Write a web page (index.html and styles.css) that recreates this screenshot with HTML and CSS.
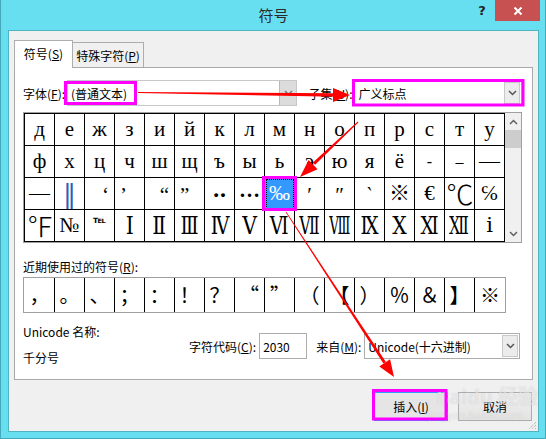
FILE: index.html
```html
<!DOCTYPE html>
<html lang="zh-CN">
<head>
<meta charset="utf-8">
<title>符号</title>
<link rel="stylesheet" href="styles.css">
</head>
<body>
<div class="window">
  <div class="titlebar">
    <div class="tb-spacer"></div>
    <div class="title">符号</div>
    <div class="controls">
      <span class="help">?</span>
      <span class="close"><svg width="10" height="10" viewBox="0 0 10 10"><path d="M1.5 1.5L8.5 8.5M8.5 1.5L1.5 8.5" stroke="#fff" stroke-width="2" fill="none"/></svg></span>
    </div>
  </div>
  <div class="client">
    <div class="tabs">
      <div class="tab active">符号(<u>S</u>)</div>
      <div class="tab">特殊字符(<u>P</u>)</div>
    </div>
    <div class="panel">
      <div class="font-row">
        <span class="lbl font-lbl">字体(<u>F</u>):</span>
        <div class="combo font-combo"><span class="combo-text">(普通文本)</span><span class="dd"><svg width="9" height="6" viewBox="0 0 9 6"><path d="M1 1l3.5 3.5L8 1" fill="none" stroke="#777" stroke-width="1.5"/></svg></span></div>
        <span class="lbl subset-lbl">子集(<u>U</u>):</span>
        <div class="combo subset-combo"><span class="combo-text">广义标点</span><span class="dd"><svg width="9" height="6" viewBox="0 0 9 6"><path d="M1 1l3.5 3.5L8 1" fill="none" stroke="#555" stroke-width="1.5"/></svg></span></div>
      </div>
      <div class="charmap">
        <div class="cells">
          <span class="c">д</span><span class="c">е</span><span class="c">ж</span><span class="c">з</span><span class="c">и</span><span class="c">й</span><span class="c">к</span><span class="c">л</span><span class="c">м</span><span class="c">н</span><span class="c">о</span><span class="c">п</span><span class="c">р</span><span class="c">с</span><span class="c">т</span><span class="c">у</span>
          <span class="c">ф</span><span class="c">х</span><span class="c">ц</span><span class="c">ч</span><span class="c">ш</span><span class="c">щ</span><span class="c">ъ</span><span class="c">ы</span><span class="c">ь</span><span class="c">э</span><span class="c">ю</span><span class="c">я</span><span class="c">ё</span><span class="c sm">‐</span><span class="c sm">–</span><span class="c">—</span>
          <span class="c">—</span><span class="c dbl">‖</span><span class="c q qr">‘</span><span class="c q ql">’</span><span class="c q qr">“</span><span class="c q ql">”</span><span class="c dots">‥</span><span class="c dots">…</span><span class="c sel">‰</span><span class="c q">′</span><span class="c q">″</span><span class="c q">‵</span><span class="c">※</span><span class="c">€</span><span class="c lt">℃</span><span class="c">℅</span>
          <span class="c lt">℉</span><span class="c">№</span><span class="c tel">℡</span><span class="c rn"><i>Ⅰ</i></span><span class="c rn"><i>Ⅱ</i></span><span class="c rn"><i class="w3">Ⅲ</i></span><span class="c rn"><i class="w3">Ⅳ</i></span><span class="c rn"><i>Ⅴ</i></span><span class="c rn"><i class="w3">Ⅵ</i></span><span class="c rn"><i class="w4">Ⅶ</i></span><span class="c rn"><i class="w5">Ⅷ</i></span><span class="c rn"><i class="w3">Ⅸ</i></span><span class="c rn"><i>Ⅹ</i></span><span class="c rn"><i class="w3">Ⅺ</i></span><span class="c rn"><i class="w4">Ⅻ</i></span><span class="c">ⅰ</span>
        </div>
        <div class="scrollbar">
          <span class="sb-btn"><svg width="9" height="6" viewBox="0 0 9 6"><path d="M1 5l3.5-3.5L8 5" fill="none" stroke="#606060" stroke-width="1.5"/></svg></span>
          <span class="thumb"></span>
          <span class="track"></span>
          <span class="sb-btn"><svg width="9" height="6" viewBox="0 0 9 6"><path d="M1 1l3.5 3.5L8 1" fill="none" stroke="#606060" stroke-width="1.5"/></svg></span>
        </div>
      </div>
      <div class="recent-lbl">近期使用过的符号(<u>R</u>):</div>
      <div class="recent">
        <span class="r rl">，</span><span class="r rl">。</span><span class="r rl">、</span><span class="r">；</span><span class="r">：</span><span class="r">！</span><span class="r">？</span><span class="r rq-r">“</span><span class="r rq-l">”</span><span class="r">（</span><span class="r">【</span><span class="r">）</span><span class="r">％</span><span class="r">＆</span><span class="r">】</span><span class="r">※</span>
      </div>
      <div class="info">
        <div class="names">
          <div class="name-lbl">Unicode 名称:</div>
          <div class="name-val">千分号</div>
        </div>
        <div class="code-row">
          <span class="lbl">字符代码(<u>C</u>):</span>
          <div class="code-input">2030</div>
          <span class="lbl from-lbl">来自(<u>M</u>):</span>
          <div class="combo from-combo"><span class="combo-text">Unicode(十六进制)</span><span class="dd"><svg width="9" height="6" viewBox="0 0 9 6"><path d="M1 1l3.5 3.5L8 1" fill="none" stroke="#555" stroke-width="1.5"/></svg></span></div>
        </div>
      </div>
    </div>
    <div class="buttons">
      <button class="btn default">插入(<u>I</u>)</button>
      <button class="btn">取消</button>
    </div>
    <svg class="grip" width="10" height="10" viewBox="0 0 10 10"><path d="M9 2L2 9M9 5L5 9M9 8L8 9" stroke="#a0a0a0" stroke-width="1" stroke-dasharray="1 1" fill="none"/></svg>
  </div>
</div>
<div class="watermark"><span class="wm-big">Baidu 经验</span><span class="wm-small">jingyan.baidu.com</span></div>
<svg class="annot" width="546" height="439" viewBox="0 0 546 439">
  <g fill="none" stroke="#ff00ff" stroke-width="3">
    <rect x="65.5" y="82.5" width="70" height="21"/>
    <rect x="353.5" y="80.5" width="169.5" height="24.5"/>
    <rect x="263.5" y="177.5" width="32" height="32"/>
    <rect x="373.5" y="390.5" width="72.5" height="28.5"/>
  </g>
  <g fill="#ff0000">
    <polygon points="138,92 336,93.3 336,96.7 138,93"/>
    <polygon points="333,88 350,95 333,102"/>
    <polygon points="358.3,122.4 357.7,121.6 312.9,162.4 315.1,164.8"/>
    <polygon points="300,177 317.6,169.3 308.6,159.9"/>
    <polygon points="286.3,211.8 285.7,212.2 383.4,363.6 385.9,362"/>
    <polygon points="394,377 390.1,359.2 379.3,366.4"/>
  </g>
</svg>
</body>
</html>
```
FILE: styles.css
```css
html, body {
  margin: 0;
  padding: 0;
}
body {
  width: 546px;
  height: 439px;
  overflow: hidden;
  position: relative;
  font-family: "Noto Sans CJK SC", "Microsoft YaHei", sans-serif;
  font-size: 12px;
  line-height: 17px;
  color: #000;
}
u { text-decoration: underline; text-underline-offset: 1px; }

.window {
  box-sizing: border-box;
  width: 546px;
  height: 439px;
  background: #68dff0;
  border: 1px solid #45a9bb;
  border-top: 0;
  padding: 0 6px 6px 7px;
  display: flex;
  flex-direction: column;
}

.titlebar {
  height: 30px;
  display: grid;
  grid-template-columns: 1fr auto 1fr;
  align-items: start;
}
.title {
  line-height: 30px;
  font-size: 15px;
  color: #2b2b2b;
}
.controls {
  justify-self: end;
  display: flex;
  align-items: flex-start;
  margin-right: -1px;
}
.help {
  width: 26px;
  height: 21px;
  display: flex;
  align-items: center;
  justify-content: center;
  font-family: "DejaVu Sans", sans-serif;
  font-weight: bold;
  font-size: 13px;
  color: #222;
}
.close {
  width: 45px;
  height: 21px;
  background: #c75050;
  display: flex;
  align-items: center;
  justify-content: center;
}

.client {
  flex: 1;
  position: relative;
  background: #f0f0f0;
  border: 1px solid #4fb3c2;
  padding: 9px 5px 0 5px;
}

.tabs {
  display: flex;
  align-items: flex-end;
  height: 27px;
}
.tab {
  box-sizing: border-box;
  height: 25px;
  border: 1px solid #adadad;
  border-bottom: 0;
  background: #f0f0f0;
  display: flex;
  align-items: center;
  justify-content: center;
}
.tab.active {
  position: relative;
  z-index: 1;
  width: 59px;
  height: 28px;
  margin-bottom: -1px;
  background: #fff;
  padding-bottom: 2px;
}
.tab + .tab {
  width: 72px;
  margin-left: -1px;
  padding-top: 1px;
}

.panel {
  box-sizing: border-box;
  height: 313px;
  background: #fff;
  border: 1px solid #a9a9a9;
  padding: 12px 10px 0 8px;
}

.font-row {
  display: flex;
  align-items: center;
  height: 26px;
}
.lbl { white-space: nowrap; }
.font-lbl { width: 44px; }
.subset-lbl { margin-left: 11px; width: 44px; }

.combo {
  box-sizing: border-box;
  height: 26px;
  border: 1px solid #c4c4c4;
  background: #fff;
  display: flex;
  align-items: stretch;
}
.combo-text {
  flex: 1;
  display: flex;
  align-items: center;
  padding-left: 3px;
  white-space: nowrap;
}
.dd {
  width: 16px;
  background: #e6e6e6;
  border-left: 1px solid #c4c4c4;
  display: flex;
  align-items: center;
  justify-content: center;
}
.font-combo { width: 231px; border-color: #c8c8c8; }
.font-combo .dd { background: #dcdcdc; border-left-color: #b8b8b8; }
.subset-combo { width: 168px; margin-left: 2px; }
.subset-combo .dd, .from-combo .dd { margin: 1px; border: 1px solid #c9c9c9; background: #ececec; width: 14px; }

.charmap {
  display: flex;
  margin-top: 6px;
  border: 1px solid #a0a0a0;
}
.cells {
  display: grid;
  grid-template-columns: repeat(16, 30px);
  grid-auto-rows: 32px;
  border-left: 1px solid #000;
  border-top: 1px solid #000;
}
.c {
  box-sizing: border-box;
  border-right: 1px solid #000;
  border-bottom: 1px solid #000;
  display: flex;
  align-items: center;
  justify-content: center;
  font-family: "Liberation Serif", "DejaVu Serif", "Noto Sans CJK SC", serif;
  font-size: 21px;
  line-height: 1;
  color: #000;
}
.c.sm { font-size: 16px; }
.c.dbl { color: #2f5fb8; font-size: 26px; font-family: "DejaVu Serif", serif; }
.c.q { align-items: flex-start; padding-top: 7px; }
.c.qr { justify-content: flex-end; padding-right: 5px; }
.c.ql { justify-content: flex-start; padding-left: 5px; }
.c.dots { align-items: flex-end; padding-bottom: 8px; font-weight: bold; }
.c.sel {
  background: #3399ff;
  color: #fff;
  outline: 1px dotted #000;
  outline-offset: -2px;
}
.c.lt { font-family: "Noto Sans CJK SC", sans-serif; font-weight: 300; font-size: 27px; letter-spacing: -1px; }
.c.tel { font-size: 10px; align-items: flex-start; padding-top: 5px; font-family: "DejaVu Sans", sans-serif; font-weight: bold; }
.c.rn {
  font-family: "DejaVu Serif", "Liberation Serif", serif;
  font-size: 24px;
}
.c.rn i {
  font-style: normal;
  display: inline-block;
  transform: scaleX(0.85);
}
.c.rn i.w3 { transform: scaleX(0.78); }
.c.rn i.w4 { transform: scaleX(0.66); }
.c.rn i.w5 { transform: scaleX(0.56); }

.scrollbar {
  width: 16px;
  background: #f0f0f0;
  display: flex;
  flex-direction: column;
}
.sb-btn {
  height: 17px;
  display: flex;
  align-items: center;
  justify-content: center;
}
.thumb {
  height: 18px;
  background: #cdcdcd;
}
.track { flex: 1; }

.recent-lbl {
  margin-top: 15px;
}
.recent {
  box-sizing: border-box;
  width: 483px;
  margin-top: 2px;
  display: flex;
  border: 1px solid #a0a0a0;
  padding-left: 1px;
}
.r {
  box-sizing: border-box;
  width: 30px;
  height: 34px;
  border-right: 1px solid #000;
  display: flex;
  align-items: center;
  justify-content: center;
  font-family: "Noto Sans CJK SC", sans-serif;
  font-size: 20px;
  line-height: 1;
}
.r:last-child { border-right: 0; }
.r.rq-r { justify-content: flex-end; padding-right: 5px; }
.r.rq-l { justify-content: flex-start; padding-left: 5px; }

.info {
  display: flex;
  margin-top: 10px;
}
.names { width: 166px; }
.name-val { margin-top: 9px; }
.code-row {
  display: flex;
  align-items: center;
  margin-top: 10px;
  height: 26px;
}
.code-input {
  box-sizing: border-box;
  width: 48px;
  height: 26px;
  margin-left: 3px;
  border: 1px solid #adadad;
  background: #fff;
  padding-left: 3px;
  display: flex;
  align-items: center;
}
.from-lbl { margin-left: 9px; }
.from-combo { width: 156px; margin-left: 3px; border-color: #adadad; }

.buttons {
  display: flex;
  justify-content: flex-end;
  gap: 10px;
  margin-top: 12px;
  padding-right: 1px;
}
.btn {
  box-sizing: border-box;
  width: 74px;
  height: 29px;
  border: 1px solid #adadad;
  background: linear-gradient(#efefef, #e3e3e3);
  font-family: "Noto Sans CJK SC", sans-serif;
  font-size: 12px;
  color: #000;
  padding: 0;
}
.btn.default { border-color: #3399ff; background: #e5e5e5; }

.grip {
  position: absolute;
  right: 1px;
  bottom: 1px;
}

.watermark {
  position: absolute;
  left: 436px;
  top: 385px;
  display: flex;
  flex-direction: column;
  color: rgba(255, 255, 255, 0.5);
  text-shadow: 0 0 1px rgba(120, 120, 120, 0.3);
  pointer-events: none;
}
.wm-big { font-family: "Noto Sans", sans-serif; font-size: 20px; line-height: 24px; font-weight: bold; }
.wm-small { font-family: "Noto Sans", sans-serif; font-size: 11px; line-height: 12px; margin-left: -8px; }

.annot {
  position: absolute;
  left: 0;
  top: 0;
  pointer-events: none;
}
```
